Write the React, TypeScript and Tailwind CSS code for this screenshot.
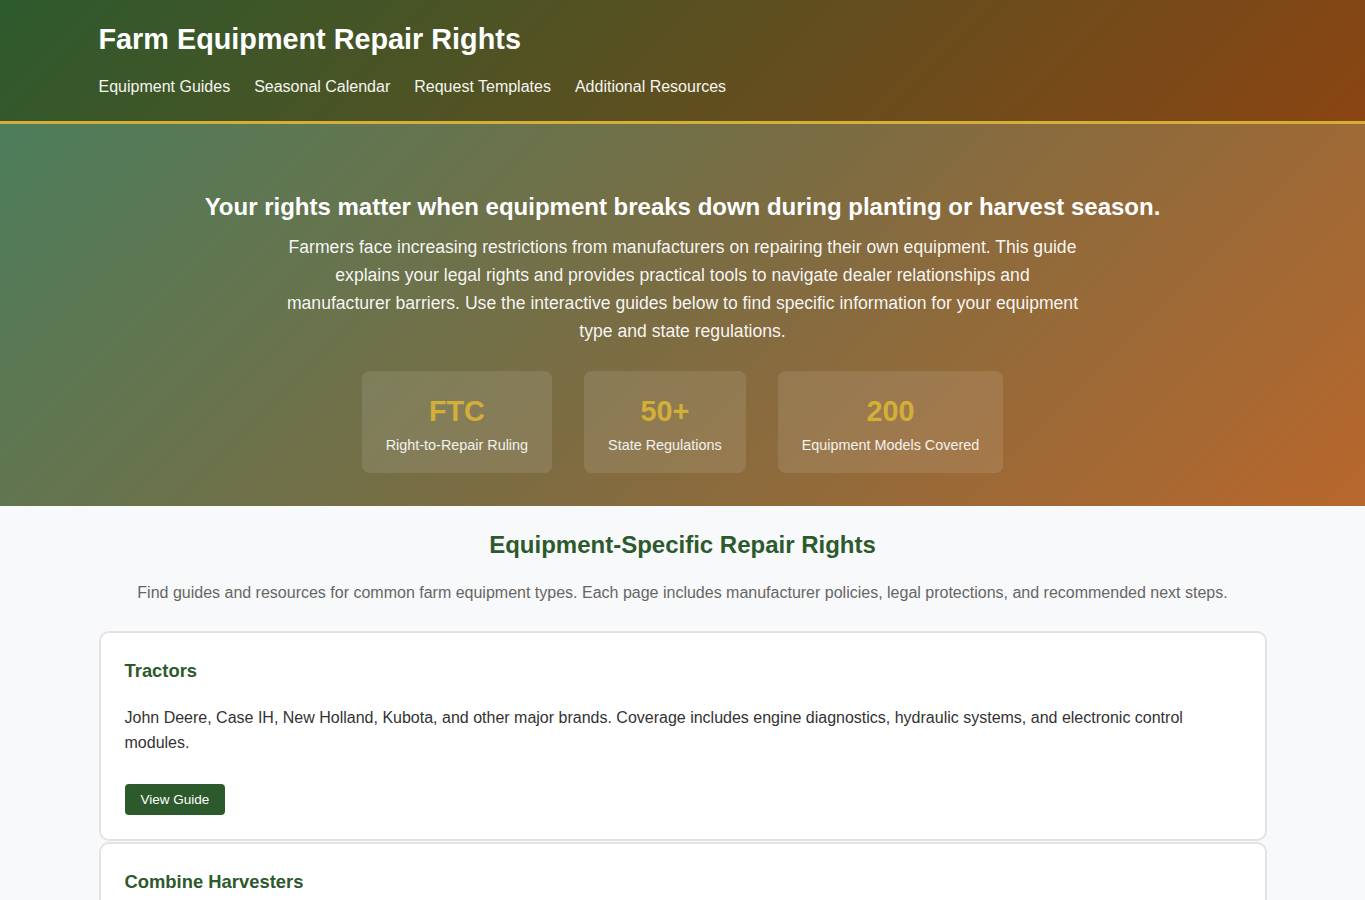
import React from "react";

const navLinks = ["Equipment Guides", "Seasonal Calendar", "Request Templates", "Additional Resources"];

const stats = [
  { value: "FTC", label: "Right-to-Repair Ruling" },
  { value: "50+", label: "State Regulations" },
  { value: "200", label: "Equipment Models Covered" },
];

const equipment = [
  {
    name: "Tractors",
    text: "John Deere, Case IH, New Holland, Kubota, and other major brands. Coverage includes engine diagnostics, hydraulic systems, and electronic control modules.",
  },
  {
    name: "Combine Harvesters",
    text: "Yield monitors, threshing systems, and GPS guidance units. Learn what you can legally repair yourself and what requires dealer software access.",
  },
];

const App = () => {
  return (
    <div className="min-h-screen bg-[#f8f9fa] font-['Liberation_Sans',Arial,sans-serif] text-[#333]">
      <header className="bg-[linear-gradient(135deg,#2d5a2d_0%,#8b4513_100%)] border-b-[3px] border-[#d4af37] text-white">
        <div className="max-w-[1200px] mx-auto px-4 pt-5 pb-[22px]">
          <h1 className="text-[28.8px] font-bold leading-[38px] mb-[17px]">Farm Equipment Repair Rights</h1>
          <nav className="flex gap-6 text-base leading-6">
            {navLinks.map((link) => (
              <a key={link} href="#" className="text-[#f5f5f0]">
                {link}
              </a>
            ))}
          </nav>
        </div>
      </header>

      <section className="bg-[linear-gradient(135deg,#4c7d5b_0%,#7d6c42_50%,#b8672c_100%)] text-white text-center pt-[65px] pb-[33px]">
        <div className="max-w-[1200px] mx-auto px-4">
          <h2 className="text-2xl font-bold leading-9 mb-2">
            Your rights matter when equipment breaks down during planting or harvest season.
          </h2>
          <p className="max-w-[800px] mx-auto text-[17.6px] leading-[28px] text-white/95">
            Farmers face increasing restrictions from manufacturers on repairing their own equipment. This guide
            explains your legal rights and provides practical tools to navigate dealer relationships and
            manufacturer barriers. Use the interactive guides below to find specific information for your equipment
            type and state regulations.
          </p>
          <div className="flex justify-center gap-8 mt-[26px]">
            {stats.map((s) => (
              <div key={s.value} className="bg-white/10 rounded-lg px-6 pt-5 pb-[17px]">
                <div className="text-[28.8px] font-bold leading-[40px] text-[#d4af37]">{s.value}</div>
                <div className="text-[14.4px] leading-[21px] mt-1 text-white/90">{s.label}</div>
              </div>
            ))}
          </div>
        </div>
      </section>

      <main className="max-w-[1200px] mx-auto px-4 pt-[21px]">
        <h2 className="text-2xl font-bold leading-9 text-center text-[#2d5a2d] mb-[18px]">
          Equipment-Specific Repair Rights
        </h2>
        <p className="text-center text-base leading-6 text-[#666] mb-[26px]">
          Find guides and resources for common farm equipment types. Each page includes manufacturer policies, legal
          protections, and recommended next steps.
        </p>
        <div className="flex flex-col gap-px">
          {equipment.map((item) => (
            <div key={item.name} className="bg-white border-2 border-[#e3e3e3] rounded-[10px] px-6 pt-[25px] pb-6">
              <h3 className="text-[18.4px] font-bold leading-[26px] text-[#2d5a2d] mb-[21px]">{item.name}</h3>
              <p className="text-base leading-[25px] text-[#333]">{item.text}</p>
              <button className="mt-[29px] bg-[#2d5a2d] text-white text-[13.5px] leading-[31px] px-4 rounded">
                View Guide
              </button>
            </div>
          ))}
        </div>
      </main>
    </div>
  );
};

export default App;
